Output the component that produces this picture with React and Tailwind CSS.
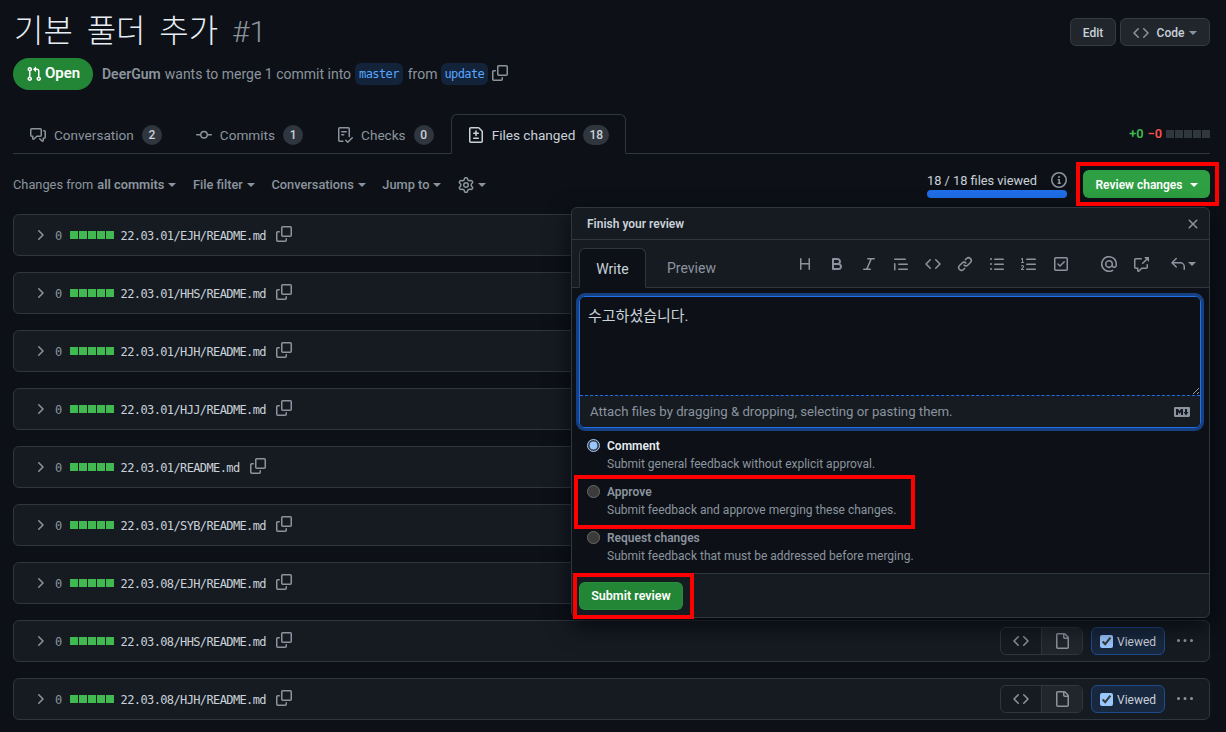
import React from 'react';

const ICONS = {
  pr: 'M1.5 3.25a2.25 2.25 0 1 1 3 2.122v5.256a2.251 2.251 0 1 1-1.5 0V5.372A2.25 2.25 0 0 1 1.5 3.25Zm5.677-.177L9.573.677A.25.25 0 0 1 10 .854V2.5h1A2.5 2.5 0 0 1 13.5 5v5.628a2.251 2.251 0 1 1-1.5 0V5a1 1 0 0 0-1-1h-1v1.646a.25.25 0 0 1-.427.177L7.177 3.427a.25.25 0 0 1 0-.354ZM3.75 2.5a.75.75 0 1 0 0 1.5.75.75 0 0 0 0-1.5Zm0 9.5a.75.75 0 1 0 0 1.5.75.75 0 0 0 0-1.5Zm8.25.75a.75.75 0 1 0 1.5 0 .75.75 0 0 0-1.5 0Z',
  copy: 'M0 6.75C0 5.784.784 5 1.75 5h1.5a.75.75 0 0 1 0 1.5h-1.5a.25.25 0 0 0-.25.25v7.5c0 .138.112.25.25.25h7.5a.25.25 0 0 0 .25-.25v-1.5a.75.75 0 0 1 1.5 0v1.5A1.75 1.75 0 0 1 9.25 16h-7.5A1.75 1.75 0 0 1 0 14.25ZM5 1.75C5 .784 5.784 0 6.75 0h7.5C15.216 0 16 .784 16 1.75v7.5A1.75 1.75 0 0 1 14.25 11h-7.5A1.75 1.75 0 0 1 5 9.25Zm1.75-.25a.25.25 0 0 0-.25.25v7.5c0 .138.112.25.25.25h7.5a.25.25 0 0 0 .25-.25v-7.5a.25.25 0 0 0-.25-.25Z',
  code: 'm11.28 3.22 4.25 4.25a.75.75 0 0 1 0 1.06l-4.25 4.25a.749.749 0 0 1-1.275-.326.749.749 0 0 1 .215-.734L13.94 8l-3.72-3.72a.749.749 0 0 1 .326-1.275.749.749 0 0 1 .734.215Zm-6.56 0a.751.751 0 0 1 1.042.018.751.751 0 0 1 .018 1.042L2.06 8l3.72 3.72a.749.749 0 0 1-.326 1.275.749.749 0 0 1-.734-.215L.47 8.53a.75.75 0 0 1 0-1.06Z',
  discussion: 'M1.75 1h8.5c.966 0 1.75.784 1.75 1.75v5.5A1.75 1.75 0 0 1 10.25 10H7.061l-2.574 2.573A1.458 1.458 0 0 1 2 11.543V10h-.25A1.75 1.75 0 0 1 0 8.25v-5.5C0 1.784.784 1 1.75 1ZM1.5 2.75v5.5c0 .138.112.25.25.25h1a.75.75 0 0 1 .75.75v2.19l2.72-2.72a.749.749 0 0 1 .53-.22h3.5a.25.25 0 0 0 .25-.25v-5.5a.25.25 0 0 0-.25-.25h-8.5a.25.25 0 0 0-.25.25Zm13 2a.25.25 0 0 0-.25-.25h-.5a.75.75 0 0 1 0-1.5h.5c.966 0 1.75.784 1.75 1.75v5.5A1.75 1.75 0 0 1 14.25 12H14v1.543a1.458 1.458 0 0 1-2.487 1.03L9.22 12.28a.749.749 0 0 1 .326-1.275.749.749 0 0 1 .734.215l2.22 2.22v-2.19a.75.75 0 0 1 .75-.75h1a.25.25 0 0 0 .25-.25Z',
  commit: 'M11.93 8.5a4.002 4.002 0 0 1-7.86 0H.75a.75.75 0 0 1 0-1.5h3.32a4.002 4.002 0 0 1 7.86 0h3.32a.75.75 0 0 1 0 1.5Zm-1.43-.75a2.5 2.5 0 1 0-5 0 2.5 2.5 0 0 0 5 0Z',
  checklist: 'M2.5 1.75v11.5c0 .138.112.25.25.25h3.17a.75.75 0 0 1 0 1.5H2.75A1.75 1.75 0 0 1 1 13.25V1.75C1 .784 1.784 0 2.75 0h8.5C12.216 0 13 .784 13 1.75v7.736a.75.75 0 0 1-1.5 0V1.75a.25.25 0 0 0-.25-.25h-8.5a.25.25 0 0 0-.25.25Zm13.274 9.537v-.001l-4.557 4.45a.75.75 0 0 1-1.055-.008l-1.943-1.95a.75.75 0 0 1 1.062-1.058l1.419 1.425 4.026-3.932a.75.75 0 1 1 1.048 1.074ZM4.75 4h4.5a.75.75 0 0 1 0 1.5h-4.5a.75.75 0 0 1 0-1.5ZM4 7.75A.75.75 0 0 1 4.75 7h2a.75.75 0 0 1 0 1.5h-2A.75.75 0 0 1 4 7.75Z',
  fileDiff: 'M1 1.75C1 .784 1.784 0 2.75 0h7.586c.464 0 .909.184 1.237.513l2.914 2.914c.329.328.513.773.513 1.237v9.586A1.75 1.75 0 0 1 13.25 16H2.75A1.75 1.75 0 0 1 1 14.25Zm1.75-.25a.25.25 0 0 0-.25.25v12.5c0 .138.112.25.25.25h10.5a.25.25 0 0 0 .25-.25V4.664a.25.25 0 0 0-.073-.177l-2.914-2.914a.25.25 0 0 0-.177-.073ZM8 3.25a.75.75 0 0 1 .75.75v1.5h1.5a.75.75 0 0 1 0 1.5h-1.5v1.5a.75.75 0 0 1-1.5 0V7h-1.5a.75.75 0 0 1 0-1.5h1.5V4A.75.75 0 0 1 8 3.25Zm-3 8a.75.75 0 0 1 .75-.75h4.5a.75.75 0 0 1 0 1.5h-4.5a.75.75 0 0 1-.75-.75Z',
  gear: 'M8 0a8.2 8.2 0 0 1 .701.031C9.444.095 9.99.645 10.16 1.29l.288 1.107c.018.066.079.158.212.224.231.114.454.243.668.386.123.082.233.09.299.071l1.103-.303c.644-.176 1.392.021 1.82.63.27.385.506.792.704 1.218.315.675.111 1.422-.364 1.891l-.814.806c-.049.048-.098.147-.088.294.016.257.016.515 0 .772-.01.147.038.246.088.294l.814.806c.475.469.679 1.216.364 1.891a7.977 7.977 0 0 1-.704 1.217c-.428.61-1.176.807-1.82.63l-1.102-.302c-.067-.019-.177-.011-.3.071a5.909 5.909 0 0 1-.668.386c-.133.066-.194.158-.211.224l-.29 1.106c-.168.646-.715 1.196-1.458 1.26a8.006 8.006 0 0 1-1.402 0c-.743-.064-1.289-.614-1.458-1.26l-.289-1.106c-.018-.066-.079-.158-.212-.224a5.738 5.738 0 0 1-.668-.386c-.123-.082-.233-.09-.299-.071l-1.103.303c-.644.176-1.392-.021-1.82-.63a8.12 8.12 0 0 1-.704-1.218c-.315-.675-.111-1.422.363-1.891l.815-.806c.05-.048.098-.147.088-.294a6.214 6.214 0 0 1 0-.772c.01-.147-.038-.246-.088-.294l-.815-.806C.635 6.045.431 5.298.746 4.623a7.92 7.92 0 0 1 .704-1.217c.428-.61 1.176-.807 1.82-.63l1.102.302c.067.019.177.011.3-.071.214-.143.437-.272.668-.386.133-.066.194-.158.211-.224l.29-1.106C6.009.645 6.556.095 7.299.03 7.53.01 7.764 0 8 0Zm-.571 1.525c-.036.003-.108.036-.137.146l-.289 1.105c-.147.561-.549.967-.998 1.189-.173.086-.34.183-.5.29-.417.278-.97.423-1.529.27l-1.103-.303c-.109-.03-.175.016-.195.045-.22.312-.412.644-.573.99-.014.031-.021.11.059.19l.815.806c.411.406.562.957.53 1.456a4.709 4.709 0 0 0 0 .582c.032.499-.119 1.05-.53 1.456l-.815.806c-.081.08-.073.159-.059.19.162.346.353.677.573.989.02.03.085.076.195.046l1.102-.303c.56-.153 1.113-.008 1.53.27.161.107.328.204.501.29.447.222.85.629.997 1.189l.289 1.105c.029.109.101.143.137.146a6.6 6.6 0 0 0 1.142 0c.036-.003.108-.036.137-.146l.289-1.105c.147-.561.549-.967.998-1.189.173-.086.34-.183.5-.29.417-.278.97-.423 1.529-.27l1.103.303c.109.029.175-.016.195-.045.22-.313.411-.644.573-.99.014-.031.021-.11-.059-.19l-.815-.806c-.411-.406-.562-.957-.53-1.456a4.709 4.709 0 0 0 0-.582c-.032-.499.119-1.05.53-1.456l.815-.806c.081-.08.073-.159.059-.19a6.464 6.464 0 0 0-.573-.989c-.02-.03-.085-.076-.195-.046l-1.102.303c-.56.153-1.113.008-1.53-.27a4.44 4.44 0 0 0-.501-.29c-.447-.222-.85-.629-.997-1.189l-.289-1.105c-.029-.11-.101-.143-.137-.146a6.6 6.6 0 0 0-1.142 0ZM11 8a3 3 0 1 1-6 0 3 3 0 0 1 6 0ZM9.5 8a1.5 1.5 0 1 0-3.001.001A1.5 1.5 0 0 0 9.5 8Z',
  info: 'M0 8a8 8 0 1 1 16 0A8 8 0 0 1 0 8Zm8-6.5a6.5 6.5 0 1 0 0 13 6.5 6.5 0 0 0 0-13ZM6.5 7.75A.75.75 0 0 1 7.25 7h1a.75.75 0 0 1 .75.75v2.75h.25a.75.75 0 0 1 0 1.5h-2a.75.75 0 0 1 0-1.5h.25v-2h-.25a.75.75 0 0 1-.75-.75ZM8 6a1 1 0 1 1 0-2 1 1 0 0 1 0 2Z',
  chevron: 'M6.22 3.22a.75.75 0 0 1 1.06 0l4.25 4.25a.75.75 0 0 1 0 1.06l-4.25 4.25a.751.751 0 0 1-1.042-.018.751.751 0 0 1-.018-1.042L9.94 8 6.22 4.28a.75.75 0 0 1 0-1.06Z',
  x: 'M3.72 3.72a.75.75 0 0 1 1.06 0L8 6.94l3.22-3.22a.749.749 0 0 1 1.275.326.749.749 0 0 1-.215.734L9.06 8l3.22 3.22a.749.749 0 0 1-.326 1.275.749.749 0 0 1-.734-.215L8 9.06l-3.22 3.22a.751.751 0 0 1-1.042-.018.751.751 0 0 1-.018-1.042L6.94 8 3.72 4.78a.75.75 0 0 1 0-1.06Z',
  heading: 'M3.75 2a.75.75 0 0 1 .75.75V7h7V2.75a.75.75 0 0 1 1.5 0v10.5a.75.75 0 0 1-1.5 0V8.5h-7v4.75a.75.75 0 0 1-1.5 0V2.75A.75.75 0 0 1 3.75 2Z',
  bold: 'M4 2h4.5a3.501 3.501 0 0 1 2.852 5.53A3.499 3.499 0 0 1 9.5 14H4a1 1 0 0 1-1-1V3a1 1 0 0 1 1-1Zm1 7v3h4.5a1.5 1.5 0 0 0 0-3Zm3.5-2a1.5 1.5 0 0 0 0-3H5v3Z',
  italic: 'M6 2.75A.75.75 0 0 1 6.75 2h6.5a.75.75 0 0 1 0 1.5h-2.505l-3.858 9H9.25a.75.75 0 0 1 0 1.5h-6.5a.75.75 0 0 1 0-1.5h2.505l3.858-9H6.75A.75.75 0 0 1 6 2.75Z',
  quote: 'M1.75 2.5h10.5a.75.75 0 0 1 0 1.5H1.75a.75.75 0 0 1 0-1.5Zm4 5h8.5a.75.75 0 0 1 0 1.5h-8.5a.75.75 0 0 1 0-1.5Zm0 5h8.5a.75.75 0 0 1 0 1.5h-8.5a.75.75 0 0 1 0-1.5ZM2.5 7.75v6a.75.75 0 0 1-1.5 0v-6a.75.75 0 0 1 1.5 0Z',
  link: 'm7.775 3.275 1.25-1.25a3.5 3.5 0 1 1 4.95 4.95l-2.5 2.5a3.5 3.5 0 0 1-4.95 0 .751.751 0 0 1 .018-1.042.751.751 0 0 1 1.042-.018 1.998 1.998 0 0 0 2.83 0l2.5-2.5a2.002 2.002 0 0 0-2.83-2.83l-1.25 1.25a.751.751 0 0 1-1.042-.018.751.751 0 0 1-.018-1.042Zm-4.69 9.64a1.998 1.998 0 0 0 2.83 0l1.25-1.25a.751.751 0 0 1 1.042.018.751.751 0 0 1 .018 1.042l-1.25 1.25a3.5 3.5 0 1 1-4.95-4.95l2.5-2.5a3.5 3.5 0 0 1 4.95 0 .751.751 0 0 1-.018 1.042.751.751 0 0 1-1.042.018 1.998 1.998 0 0 0-2.83 0l-2.5 2.5a1.998 1.998 0 0 0 0 2.83Z',
  ul: 'M5.75 2.5h8.5a.75.75 0 0 1 0 1.5h-8.5a.75.75 0 0 1 0-1.5Zm0 5h8.5a.75.75 0 0 1 0 1.5h-8.5a.75.75 0 0 1 0-1.5Zm0 5h8.5a.75.75 0 0 1 0 1.5h-8.5a.75.75 0 0 1 0-1.5ZM2 14a1 1 0 1 1 0-2 1 1 0 0 1 0 2Zm1-6a1 1 0 1 1-2 0 1 1 0 0 1 2 0ZM2 4a1 1 0 1 1 0-2 1 1 0 0 1 0 2Z',
  ol: 'M5 3.25a.75.75 0 0 1 .75-.75h8.5a.75.75 0 0 1 0 1.5h-8.5A.75.75 0 0 1 5 3.25Zm0 5a.75.75 0 0 1 .75-.75h8.5a.75.75 0 0 1 0 1.5h-8.5A.75.75 0 0 1 5 8.25Zm0 5a.75.75 0 0 1 .75-.75h8.5a.75.75 0 0 1 0 1.5h-8.5a.75.75 0 0 1-.75-.75ZM.924 10.32a.5.5 0 0 1-.851-.525l.001-.001.001-.002.002-.004.007-.011c.097-.144.215-.273.348-.384.228-.19.588-.392 1.068-.392.468 0 .858.181 1.126.484.259.294.377.673.377 1.038 0 .987-.686 1.495-1.156 1.845l-.047.035c-.303.225-.522.4-.654.597h1.357a.5.5 0 0 1 0 1H.5a.5.5 0 0 1-.5-.5c0-1.005.692-1.52 1.167-1.875l.035-.025c.531-.396.8-.625.8-1.078a.57.57 0 0 0-.128-.376C1.806 10.068 1.695 10 1.5 10a.658.658 0 0 0-.429.163.835.835 0 0 0-.144.153ZM2.003 2.5V6h.503a.5.5 0 0 1 0 1H.5a.5.5 0 0 1 0-1h.503V3.308l-.28.14a.5.5 0 0 1-.446-.895l1.003-.5a.5.5 0 0 1 .723.447Z',
  task: 'M2.5 2.75a.25.25 0 0 1 .25-.25h10.5a.25.25 0 0 1 .25.25v10.5a.25.25 0 0 1-.25.25H2.75a.25.25 0 0 1-.25-.25ZM2.75 1A1.75 1.75 0 0 0 1 2.75v10.5c0 .966.784 1.75 1.75 1.75h10.5A1.75 1.75 0 0 0 15 13.25V2.75A1.75 1.75 0 0 0 13.25 1Zm9.03 4.22a.75.75 0 0 1 0 1.06l-4.25 4.25a.75.75 0 0 1-1.06 0l-2-2a.75.75 0 1 1 1.06-1.06l1.47 1.47 3.72-3.72a.75.75 0 0 1 1.06 0Z',
  mention: 'M4.75 2.37a6.501 6.501 0 0 0 6.5 11.26.75.75 0 0 1 .75 1.298A7.999 7.999 0 0 1 .989 4.148 8 8 0 0 1 16 7.75v1.5a2.75 2.75 0 0 1-5.072 1.475 3.999 3.999 0 0 1-6.65-4.19A4 4 0 0 1 12 8v1.25a1.25 1.25 0 0 0 2.5 0V7.867a6.5 6.5 0 0 0-9.75-5.496ZM10.5 8a2.5 2.5 0 1 0-5 0 2.5 2.5 0 0 0 5 0Z',
  crossRef: 'M2.75 3.5a.25.25 0 0 0-.25.25v7.5c0 .138.112.25.25.25h2a.75.75 0 0 1 .75.75v2.19l2.72-2.72a.749.749 0 0 1 .53-.22h4.5a.25.25 0 0 0 .25-.25v-2.5a.75.75 0 0 1 1.5 0v2.5A1.75 1.75 0 0 1 13.25 13H9.06l-2.573 2.573A1.458 1.458 0 0 1 4 14.543V13H2.75A1.75 1.75 0 0 1 1 11.25v-7.5C1 2.784 1.784 2 2.75 2h5.5a.75.75 0 0 1 0 1.5ZM16 1.25v4.146a.25.25 0 0 1-.427.177L14.03 4.03l-3.75 3.75a.749.749 0 0 1-1.275-.326.749.749 0 0 1 .215-.734l3.75-3.75-1.543-1.543A.25.25 0 0 1 11.604 1h4.146a.25.25 0 0 1 .25.25Z',
  reply: 'M6.78 1.97a.75.75 0 0 1 0 1.06L3.81 6h6.44A4.75 4.75 0 0 1 15 10.75v2.5a.75.75 0 0 1-1.5 0v-2.5a3.25 3.25 0 0 0-3.25-3.25H3.81l2.97 2.97a.749.749 0 0 1-.326 1.275.749.749 0 0 1-.734-.215L1.47 7.28a.75.75 0 0 1 0-1.06l4.25-4.25a.75.75 0 0 1 1.06 0Z',
  markdown: 'M14.85 3c.63 0 1.15.52 1.14 1.15v7.7c0 .63-.51 1.15-1.15 1.15H1.15C.52 13 0 12.48 0 11.84V4.15C0 3.52.52 3 1.15 3ZM9 11V5H7L5.5 7 4 5H2v6h2V8l1.5 1.92L7 8v3Zm2.99.5L14.5 8H13V5h-2v3H9.5Z',
  file: 'M2 1.75C2 .784 2.784 0 3.75 0h6.586c.464 0 .909.184 1.237.513l2.914 2.914c.329.328.513.773.513 1.237v9.586A1.75 1.75 0 0 1 13.25 16h-9.5A1.75 1.75 0 0 1 2 14.25Zm1.75-.25a.25.25 0 0 0-.25.25v12.5c0 .138.112.25.25.25h9.5a.25.25 0 0 0 .25-.25V6h-2.75A1.75 1.75 0 0 1 9 4.25V1.5Zm6.75.062V4.25c0 .138.112.25.25.25h2.688l-.011-.013-2.914-2.914-.013-.011Z',
  kebab: 'M8 9a1.5 1.5 0 1 0 0-3 1.5 1.5 0 0 0 0 3ZM1.5 9a1.5 1.5 0 1 0 0-3 1.5 1.5 0 0 0 0 3Zm13 0a1.5 1.5 0 1 0 0-3 1.5 1.5 0 0 0 0 3Z',
};

const Icon = ({ name, className = '' }) => (
  <svg viewBox="0 0 16 16" width="16" height="16" fill="currentColor" fillRule="evenodd" className={`shrink-0 ${className}`}>
    <path d={ICONS[name]} />
  </svg>
);

const Caret = ({ className = '' }) => (
  <span className={`inline-block w-0 h-0 border-x-4 border-x-transparent border-t-4 border-t-current ${className}`} />
);

const TABS = [
  { icon: 'discussion', label: 'Conversation', count: 2 },
  { icon: 'commit', label: 'Commits', count: 1 },
  { icon: 'checklist', label: 'Checks', count: 0 },
  { icon: 'fileDiff', label: 'Files changed', count: 18, active: true },
];

const FILES = [
  '22.03.01/EJH/README.md',
  '22.03.01/HHS/README.md',
  '22.03.01/HJH/README.md',
  '22.03.01/HJJ/README.md',
  '22.03.01/README.md',
  '22.03.01/SYB/README.md',
  '22.03.08/EJH/README.md',
  '22.03.08/HHS/README.md',
  '22.03.08/HJH/README.md',
];

const TOOLBAR = [
  ['heading', 'bold', 'italic', 'quote', 'code', 'link', 'ul', 'ol', 'task'],
  ['mention', 'crossRef'],
];

const OPTIONS = [
  { label: 'Comment', desc: 'Submit general feedback without explicit approval.', checked: true },
  { label: 'Approve', desc: 'Submit feedback and approve merging these changes.' },
  { label: 'Request changes', desc: 'Submit feedback that must be addressed before merging.' },
];

function FileRow({ name }) {
  return (
    <div className="h-[42px] flex items-center pl-[18px] pr-4 bg-[#161b22] border border-[#30363d] rounded-md">
      <Icon name="chevron" className="text-[#8b949e]" />
      <span className="ml-[7px] pt-px font-['DejaVu_Sans_Mono',monospace] text-xs tracking-[-0.62px] text-[#8b949e]">0</span>
      <div className="ml-2 flex gap-px">
        {[0, 1, 2, 3, 4].map((i) => (
          <span key={i} className="w-2 h-2 bg-[#3fb950]" />
        ))}
      </div>
      <span className="ml-[7px] pt-px font-['DejaVu_Sans_Mono',monospace] text-xs tracking-[-0.62px] text-[#c9d1d9]">{name}</span>
      <Icon name="copy" className="ml-[10px] -mt-[2px] text-[#8b949e]" />

      <div className="ml-auto flex items-center">
        <div className="flex h-7 w-[83px] rounded-md border border-[#30363d] overflow-hidden">
          <span className="w-[41px] flex items-center justify-center text-[#8b949e] border-r border-[#30363d]">
            <Icon name="code" />
          </span>
          <span className="flex-1 flex items-center justify-center bg-[#21262d] text-[#8b949e]">
            <Icon name="file" />
          </span>
        </div>
        <label className="ml-2 h-7 w-[74px] flex items-center pl-2 rounded-md border border-[#1f4b8e] bg-[#18283f] text-xs text-[#c9d1d9]">
          <input type="checkbox" checked readOnly className="m-0 w-[13px] h-[13px] [color-scheme:dark]" />
          <span className="ml-1 pt-[2px]">Viewed</span>
        </label>
        <Icon name="kebab" className="ml-3 text-[#8b949e]" />
      </div>
    </div>
  );
}

function ReviewPanel() {
  return (
    <div className="absolute left-[571px] top-[207px] w-[639px] h-[411px] flex flex-col bg-[#161b22] border border-[#30363d] rounded-md shadow-[0_8px_24px_rgba(1,4,9,0.75)] overflow-hidden">
      <div className="h-8 shrink-0 flex items-center justify-between pl-[15px] pr-2 border-b border-[#30363d]">
        <span className="text-xs font-semibold text-[#c9d1d9]">Finish your review</span>
        <Icon name="x" className="text-[#8b949e]" />
      </div>

      <div className="h-12 shrink-0 flex items-end pl-[7px] border-b border-[#30363d] relative">
        <div className="h-10 w-[67px] -mb-px pt-[2px] flex items-center justify-center text-sm text-[#c9d1d9] bg-[#0d1117] border border-[#30363d] border-b-[#0d1117] rounded-t-md">
          Write
        </div>
        <div className="h-10 ml-[21px] pt-[2px] flex items-center text-sm text-[#8b949e]">Preview</div>
        <div className="absolute left-[225px] top-4 flex items-center text-[#8b949e]">
          <div className="flex gap-4">
            {TOOLBAR[0].map((n) => (
              <Icon key={n} name={n} />
            ))}
          </div>
          <div className="ml-8 flex gap-4">
            {TOOLBAR[1].map((n) => (
              <Icon key={n} name={n} />
            ))}
          </div>
          <div className="ml-[21px] flex items-center">
            <Icon name="reply" />
            <Caret className="ml-[2px]" />
          </div>
        </div>
      </div>

      <div className="flex-1 flex flex-col bg-[#0d1117] min-h-0">
        <div className="ml-[7px] mr-2 mt-2 h-[132px] shrink-0 flex flex-col rounded-md border border-[#1f6feb] ring-[3px] ring-[#1f6feb]/50 overflow-hidden">
          <textarea
            readOnly
            defaultValue="수고하셨습니다."
            className="flex-1 min-h-0 block w-full resize-y px-2 pt-[9px] pb-2 text-[15px] leading-[20px] text-[#c9d1d9] bg-[#0d1117] outline-none [color-scheme:dark]"
          />
          <div className="h-8 shrink-0 flex items-center justify-between pl-[10px] pr-[10px] bg-[#161b22] border-t border-dashed border-[#1f6feb] text-[13.2px] text-[#8b949e]">
            <span>Attach files by dragging &amp; dropping, selecting or pasting them.</span>
            <Icon name="markdown" />
          </div>
        </div>

        <div className="mt-2 flex flex-col pl-[15px]">
          {OPTIONS.map((o) => (
            <div key={o.label} className="h-[46px] flex">
              <input
                type="radio"
                name="review"
                checked={!!o.checked}
                disabled={!o.checked}
                readOnly
                className="m-0 mt-[3px] w-[13px] h-[13px] [color-scheme:dark]"
              />
              <div className="ml-[7px] pt-px text-xs leading-[18px]">
                <div className={o.checked ? 'font-semibold text-[#e6edf3]' : 'font-semibold text-[#8b949e]'}>{o.label}</div>
                <div className="text-[#8b949e]">{o.desc}</div>
              </div>
            </div>
          ))}
        </div>
      </div>

      <div className="h-11 shrink-0 pt-2 pl-[7px] border-t border-[#30363d]">
        <button className="h-7 w-[104px] pt-px rounded-md bg-[#238636] border border-[#2e9a40]/40 text-[12.5px] font-semibold text-white">
          Submit review
        </button>
      </div>
    </div>
  );
}

export default function App() {
  return (
    <div className="relative w-[1226px] h-[732px] overflow-hidden bg-[#0d1117] text-[#c9d1d9] font-['Roboto','Noto_Sans_CJK_KR',sans-serif]">
      <div className="ml-[13px] w-[1197px]">
        <div className="h-[58px] flex justify-between">
          <h1 className="pt-[9px] pl-px text-[32px] leading-[44px] font-light text-[#e6edf3] [word-spacing:6px]">
            기본 풀더 추가 <span className="text-[30px] text-[#8b949e]">#1</span>
          </h1>
          <div className="mt-[18px] flex gap-1">
            <button className="h-7 w-[46px] pt-px rounded-md bg-[#21262d] border border-[#363b42] text-xs font-medium text-[#c9d1d9]">Edit</button>
            <button className="h-7 w-[90px] pt-px flex items-center justify-center rounded-md bg-[#21262d] border border-[#363b42] text-xs font-medium text-[#c9d1d9]">
              <Icon name="code" className="text-[#8b949e]" />
              <span className="ml-2">Code</span>
              <Caret className="ml-[5px] text-[#8b949e]" />
            </button>
          </div>
        </div>

        <div className="h-8 flex items-center text-sm text-[#8b949e]">
          <span className="h-8 w-20 flex items-center justify-center rounded-full bg-[#238636] text-white font-semibold">
            <Icon name="pr" />
            <span className="ml-[3px] text-[15px]">Open</span>
          </span>
          <span className="ml-[9px] font-semibold">DeerGum</span>
          <span className="ml-1">wants to merge 1 commit into</span>
          <span className="ml-1 h-[22px] px-1 flex items-center rounded-md bg-[#12233a] text-[#58a6ff] font-['DejaVu_Sans_Mono',monospace] text-xs tracking-[-0.62px]">master</span>
          <span className="ml-[5px]">from</span>
          <span className="ml-[3px] h-[22px] px-1 flex items-center rounded-md bg-[#12233a] text-[#58a6ff] font-['DejaVu_Sans_Mono',monospace] text-xs tracking-[-0.62px]">update</span>
          <Icon name="copy" className="ml-1 -mt-[2px]" />
        </div>

        <div className="mt-6 h-10 flex items-end border-b border-[#30363d]">
          {TABS.map((t) => (
            <div
              key={t.label}
              className={`h-10 -mb-px pt-[2px] flex items-center px-4 border rounded-t-md text-[13.6px] ${
                t.active ? 'bg-[#0d1117] border-[#30363d] border-b-[#0d1117] text-[#c9d1d9]' : 'border-transparent text-[#8b949e]'
              }`}
            >
              <Icon name={t.icon} />
              <span className="ml-2">{t.label}</span>
              <span className="ml-2 h-5 min-w-5 px-[6px] flex items-center justify-center rounded-full bg-[#30363d] text-xs font-medium text-[#c9d1d9]">
                {t.count}
              </span>
            </div>
          ))}
          <div className="ml-auto h-10 pt-[2px] flex items-center gap-1 text-[12.8px] font-semibold">
            <span className="text-[#3fb950]">+0</span>
            <span className="text-[#f85149]">−0</span>
            <div className="flex gap-px">
              {[0, 1, 2, 3, 4].map((i) => (
                <span key={i} className="w-2 h-2 bg-[#30363d]" />
              ))}
            </div>
          </div>
        </div>

        <div className="mt-4 h-[44px] flex items-start justify-between">
          <div className="h-7 pt-[2px] flex items-center gap-[16.5px] text-[12.8px] text-[#8b949e]">
            <span className="flex items-center">
              Changes from <span className="ml-1 font-semibold">all commits</span>
              <Caret className="ml-1" />
            </span>
            <span className="flex items-center font-medium">File filter<Caret className="ml-1" /></span>
            <span className="flex items-center font-medium">Conversations<Caret className="ml-1" /></span>
            <span className="flex items-center font-medium">Jump to<Caret className="ml-1" /></span>
            <span className="flex items-center"><Icon name="gear" /><Caret className="ml-1" /></span>
          </div>
          <div className="flex items-start">
            <div className="w-[140px] mt-[2px]">
              <div className="h-4 flex items-center justify-between text-[12.8px] text-[#c9d1d9]">
                <span className="pt-[2px]">18 / 18 files viewed</span>
                <Icon name="info" className="text-[#8b949e]" />
              </div>
              <div className="mt-[2px] h-2 rounded-md bg-[#1f6feb]" />
            </div>
            <button className="ml-4 h-7 w-[127px] pt-[2px] flex items-center justify-center rounded-md bg-[#2ea043] text-xs font-semibold text-white">
              Review changes
              <Caret className="ml-[7px]" />
            </button>
          </div>
        </div>

        <div className="flex flex-col gap-4">
          {FILES.map((f) => (
            <FileRow key={f} name={f} />
          ))}
        </div>
      </div>

      <ReviewPanel />

      {/* red annotation boxes drawn over the screenshot */}
      <div className="absolute left-[1076px] top-[162px] w-[143px] h-[44px] border-4 border-[#ff0000]" />
      <div className="absolute left-[574px] top-[475px] w-[341px] h-[54px] border-4 border-[#ff0000]" />
      <div className="absolute left-[573px] top-[573px] w-[121px] h-[46px] border-4 border-[#ff0000]" />
    </div>
  );
}
